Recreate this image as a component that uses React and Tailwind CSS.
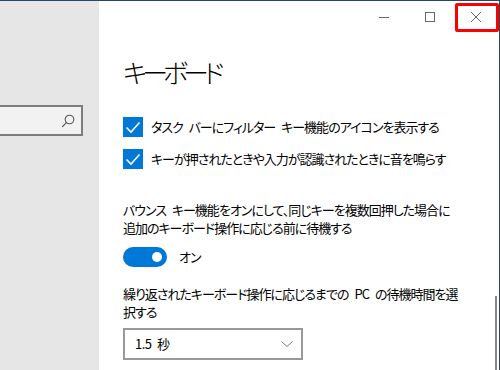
import React from 'react';

const jp = "font-['Noto_Sans_CJK_JP','Noto_Sans',sans-serif] [font-feature-settings:'palt']";
const body = "text-[13px] tracking-[-1px] [word-spacing:4px] text-black";

function CheckRow({ label }) {
  return (
    <div className="flex items-center h-5 gap-2">
      <span className="w-5 h-5 bg-[#0078d7] flex items-center justify-center shrink-0">
        <svg width="20" height="20" viewBox="0 0 20 20" fill="none">
          <path d="M3.5 10.5 L8 15 L16.5 5.5" stroke="white" strokeWidth="1.6" />
        </svg>
      </span>
      <span className={`${body} leading-5 whitespace-nowrap`}>{label}</span>
    </div>
  );
}

export default function App() {
  return (
    <div className={`w-[500px] h-[370px] overflow-hidden bg-white border-t border-r border-[#1e4a6e] flex relative ${jp}`}>
      {/* left nav */}
      <div className="w-[99px] bg-[#e6e6e6] shrink-0">
        <div className="mt-[104px] -ml-2 w-[91px] h-[31px] border-2 border-[#7d7d7d] bg-[#f2f2f2] flex items-center justify-end pr-[6px]">
          <svg width="14" height="14" viewBox="0 0 14 14" fill="none">
            <circle cx="8.5" cy="5.5" r="4.3" stroke="#555" strokeWidth="1.1" />
            <path d="M5.4 8.6 L1.2 12.8" stroke="#555" strokeWidth="1.2" />
          </svg>
        </div>
      </div>

      {/* content */}
      <div className="flex-1 min-w-0 flex flex-col">
        <div className="flex justify-end h-[32px]">
          <div className="w-[46px] h-[32px] flex items-center justify-center">
            <svg width="10" height="10" viewBox="0 0 10 10">
              <path d="M0 5.5 H10" stroke="#666" strokeWidth="1" />
            </svg>
          </div>
          <div className="w-[46px] h-[32px] flex items-center justify-center">
            <svg width="10" height="10" viewBox="0 0 10 10" fill="none">
              <rect x="0.5" y="0.5" width="9" height="9" stroke="#666" strokeWidth="1" />
            </svg>
          </div>
          <div className="w-[46px] h-[32px] flex items-center justify-center relative">
            <svg width="10" height="10" viewBox="0 0 10 10">
              <path d="M0 0 L10 10 M10 0 L0 10" stroke="#666" strokeWidth="1" />
            </svg>
            <span className="absolute left-[2px] top-[2px] w-[44px] h-[29px] border-[3px] border-[#ff0000] rounded-[2px]" />
          </div>
        </div>

        <div className="pl-[24px]">
          <h1 className="mt-[19px] text-[26px] tracking-[-5px] leading-[40px] font-light text-black">キーボード</h1>

          <div className="mt-[25px] flex flex-col gap-3">
            <CheckRow label="タスク バーにフィルター キー機能のアイコンを表示する" />
            <CheckRow label="キーが押されたときや入力が認識されたときに音を鳴らす" />
          </div>

          <p className={`mt-[32px] ${body} leading-[18px]`}>
            <span className="block whitespace-nowrap">バウンス キー機能をオンにして、同じキーを複数回押した場合に</span>
            <span className="block whitespace-nowrap">追加のキーボード操作に応じる前に待機する</span>
          </p>

          <div className="mt-[10px] flex items-center gap-3">
            <span className="w-[44px] h-[20px] rounded-full bg-[#0078d7] flex items-center justify-end pr-[5px]">
              <span className="w-[10px] h-[10px] rounded-full bg-white" />
            </span>
            <span className={`${body} leading-5`}>オン</span>
          </div>

          <p className={`mt-[18px] ${body} leading-[18px]`}>
            <span className="block whitespace-nowrap">繰り返されたキーボード操作に応じるまでの PC の待機時間を選</span>
            <span className="block whitespace-nowrap">択する</span>
          </p>

          <div className="mt-[7px] w-[180px] h-[32px] border-2 border-[#999999] flex items-center justify-between pl-[10px] pr-[8px]">
            <span className="text-[13px] tracking-[-0.5px] [word-spacing:3px] text-black">1.5 秒</span>
            <svg width="12" height="6" viewBox="0 0 12 6" fill="none">
              <path d="M0.5 0.5 L6 5.5 L11.5 0.5" stroke="#777" strokeWidth="1" />
            </svg>
          </div>
        </div>
      </div>

      {/* scrollbar */}
      <span className="absolute right-[2px] top-[295px] w-[2px] h-[80px] bg-[#858585]" />
    </div>
  );
}
